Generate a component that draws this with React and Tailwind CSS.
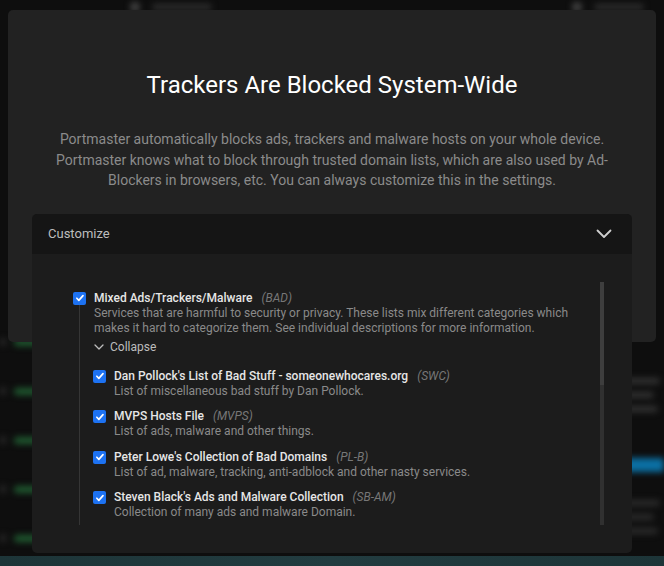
import React from 'react';

const font = { fontFamily: 'Roboto, "Liberation Sans", sans-serif' };

function Check({ className = '' }) {
  return (
    <span className={`flex h-[13px] w-[13px] shrink-0 items-center justify-center rounded-[2px] bg-[#1d72f2] ${className}`}>
      <svg viewBox="0 0 12 12" className="h-[10px] w-[10px]" fill="none" stroke="white" strokeWidth="2" strokeLinecap="round" strokeLinejoin="round">
        <path d="M2.2 6.3l2.4 2.5 5-5.6" />
      </svg>
    </span>
  );
}

const lists = [
  { name: "Dan Pollock's List of Bad Stuff - someonewhocares.org", id: 'SWC', desc: 'List of miscellaneous bad stuff by Dan Pollock.' },
  { name: 'MVPS Hosts File', id: 'MVPS', desc: 'List of ads, malware and other things.' },
  { name: "Peter Lowe's Collection of Bad Domains", id: 'PL-B', desc: 'List of ad, malware, tracking, anti-adblock and other nasty services.' },
  { name: "Steven Black's Ads and Malware Collection", id: 'SB-AM', desc: 'Collection of many ads and malware Domain.' },
];

function Backdrop() {
  return (
    <div className="flex h-[566px] w-[664px] flex-col bg-[#0e0e0e]">
      <div className="flex h-[14px] items-center justify-between px-[130px] blur-[3px]">
        <div className="flex items-center gap-3">
          <span className="h-[10px] w-[10px] rounded-full bg-[#444]" />
          <span className="h-[6px] w-[60px] rounded bg-[#2e2e2e]" />
        </div>
        <div className="mr-[-110px] flex items-center gap-3">
          <span className="h-[10px] w-[10px] rounded-full bg-[#444]" />
          <span className="h-[6px] w-[50px] rounded bg-[#2e2e2e]" />
        </div>
      </div>
      <div className="flex flex-1 justify-between pt-[324px]">
        <div className="flex flex-col gap-[41px] blur-[3px]">
          {[0, 1, 2, 3, 4].map((i) => (
            <div key={i} className="flex items-center gap-[8px]">
              <span className="h-[8px] w-[6px] rounded-full bg-[#2a2a2a]" />
              <span className="h-[7px] w-[60px] rounded bg-[#1f5a30]" />
            </div>
          ))}
        </div>
        <div className="flex w-[40px] flex-col gap-[8px] pt-[40px] blur-[3px]">
          <span className="h-[6px] w-[36px] rounded bg-[#333]" />
          <span className="h-[6px] w-[30px] rounded bg-[#333]" />
          <span className="h-[6px] w-[34px] rounded bg-[#333]" />
          <span className="mt-[38px] h-[14px] w-[40px] bg-[#0b6fa3]" />
          <span className="mt-[20px] h-[6px] w-[36px] rounded bg-[#2c2c2c]" />
          <span className="h-[6px] w-[30px] rounded bg-[#2c2c2c]" />
          <span className="h-[6px] w-[34px] rounded bg-[#2c2c2c]" />
        </div>
      </div>
      <div className="h-[10px] bg-gradient-to-r from-[#1d3538] via-[#223c40] to-[#1d3538]" />
    </div>
  );
}

export default function App() {
  return (
    <div className="relative h-[566px] w-[664px] overflow-hidden" style={font}>
      <Backdrop />
      <div className="absolute left-[8px] top-[10px] w-[648px]">
        <div className="h-[332px] rounded-[5px] bg-[#222222] pt-[59px]">
          <h1 className="text-center text-[24px] leading-[32px] font-normal text-white">Trackers Are Blocked System-Wide</h1>
          <p className="mx-auto mt-[28px] w-[564px] text-center text-[14px] leading-[20.5px] text-[#8b8b8b]">
            Portmaster automatically blocks ads, trackers and malware hosts on your whole device. Portmaster knows what to block through trusted domain lists, which are also used by Ad-Blockers in browsers, etc. You can always customize this in the settings.
          </p>
          <div className="mx-[24px] mt-[23px] overflow-hidden rounded-[5px] bg-[#1c1c1c]">
            <div className="flex h-[40px] items-center justify-between bg-[#151515] pl-[16px] pr-[20px]">
              <span className="text-[13px] text-[#bdbdbd]">Customize</span>
              <svg viewBox="0 0 16 10" className="h-[10px] w-[16px]" fill="none" stroke="#cfcfcf" strokeWidth="1.8" strokeLinecap="round" strokeLinejoin="round">
                <path d="M1.5 1.5L8 8l6.5-6.5" />
              </svg>
            </div>
            <div className="flex h-[299px] pl-[41px] pr-[28px] pt-[28px] pb-[28px]">
              <div className="flex flex-1 pt-[10px]">
                <div className="flex w-[13px] flex-col items-center">
                  <Check />
                  <span className="w-px flex-1 bg-[#353535]" />
                </div>
                <div className="ml-[8px] flex flex-1 flex-col text-[12px] leading-[15px]">
                  <div className="-mt-[1px]">
                    <span className="font-medium text-[#e6e6e6]">Mixed Ads/Trackers/Malware</span>
                    <span className="ml-[9px] italic text-[#777]">(BAD)</span>
                  </div>
                  <p className="w-[480px] text-[#8a8a8a]">
                    Services that are harmful to security or privacy. These lists mix different categories which makes it hard to categorize them. See individual descriptions for more information.
                  </p>
                  <div className="mt-[4px] flex items-center gap-[6px] text-[#bdbdbd]">
                    <svg viewBox="0 0 10 6" className="h-[6px] w-[10px]" fill="none" stroke="#bdbdbd" strokeWidth="1.3" strokeLinecap="round" strokeLinejoin="round">
                      <path d="M1 1l4 4 4-4" />
                    </svg>
                    <span>Collapse</span>
                  </div>
                  <div className="-ml-px mt-[14px] flex flex-col gap-[10.5px]">
                    {lists.map((l) => (
                      <div key={l.id} className="flex">
                        <Check className="mt-[1px]" />
                        <div className="ml-[8px]">
                          <div>
                            <span className="font-medium text-[#e6e6e6]">{l.name}</span>
                            <span className="ml-[9px] italic text-[#777]">({l.id})</span>
                          </div>
                          <div className="text-[#8a8a8a]">{l.desc}</div>
                        </div>
                      </div>
                    ))}
                  </div>
                </div>
              </div>
              <div className="flex w-[4px] flex-col bg-[#303030]">
                <span className="h-[103px] bg-[#3e3e3e]" />
              </div>
            </div>
          </div>
        </div>
      </div>
    </div>
  );
}
